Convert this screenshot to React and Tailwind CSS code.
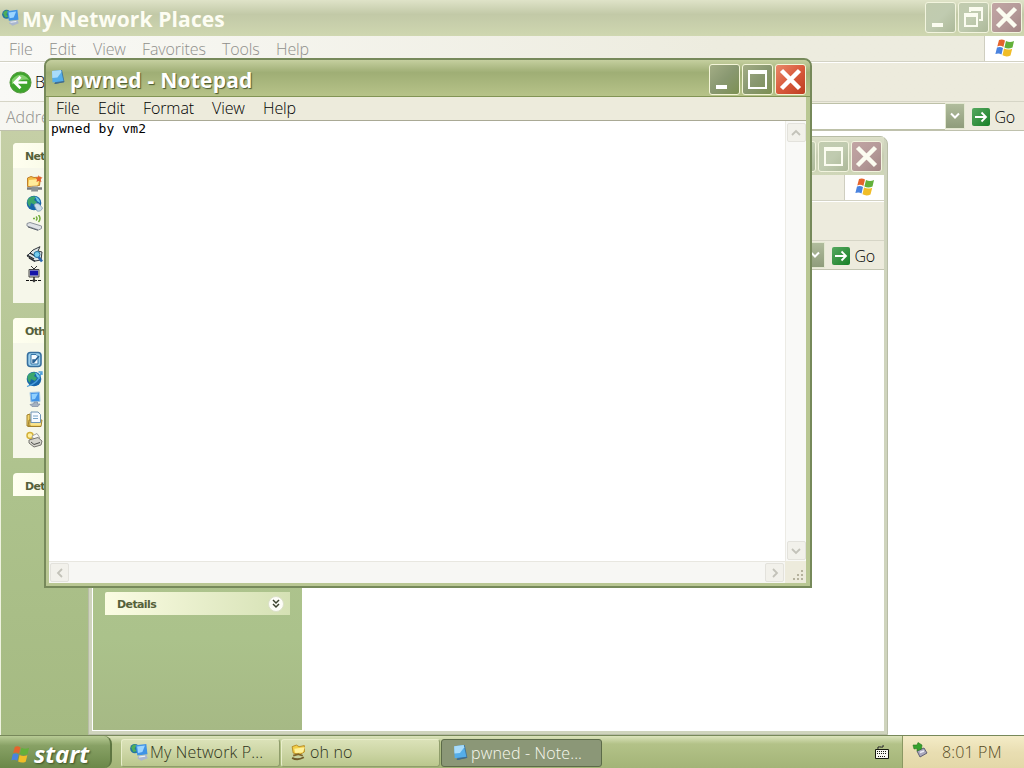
import React from "react";

const UI = "font-['Open_Sans','Noto_Sans',sans-serif] font-light";

function Flag({ className }) {
  return (
    <svg viewBox="0 0 20 18" className={className}>
      <path d="M4 1 Q7 -.5 10 1.6 L8.4 8 Q5.500 6 2.300 7.500Z" fill="#e5642c" />
      <path d="M11 2 Q15 4 19 2 L17.500 8.500 Q13 10.500 9.400 8.400Z" fill="#63b03a" />
      <path d="M2 8.600 Q5 7 8 9 L6.500 15.600 Q4 13.700 .4 15Z" fill="#4a83df" />
      <path d="M9 9.500 Q13 11.500 17.200 9.700 L15.500 16.500 Q11.500 18.500 7.500 16.300Z" fill="#f0bd27" />
    </svg>
  );
}

function NetworkIcon({ className }) {
  return (
    <svg viewBox="0 0 16 16" className={className}>
      <circle cx="4.300" cy="5" r="4.200" fill="#23769f" />
      <path d="M1 4 Q3 0 6 2 L4 5 L6 7 L3 8Z" fill="#4eae58" />
      <path d="M5 2 L14.500 .8 L15.500 10 L6.500 11Z" fill="#3f93e6" />
      <path d="M6.300 3.200 L13.300 2.300 L11 8 L7.200 8.800Z" fill="#9bd5ff" />
      <path d="M8 11.500 L14.500 10.500 L15.800 13.500 L10 15.800 L6.500 13.500Z" fill="#a9b6cf" />
      <path d="M8 12.500 L13.500 11.700" stroke="#edf2f8" />
    </svg>
  );
}

function NotepadIcon({ className }) {
  return (
    <svg viewBox="0 0 16 16" className={className}>
      <path d="M4 2 L12 1 L14.500 13 L5 15Z" fill="#3f769f" />
      <path d="M2 2 L11 1 L13.500 12 L2.500 13.500Z" fill="#55aeea" />
      <path d="M2 2 L11 1 L11.500 3 L7.500 8.500 L2.300 9Z" fill="#a9dcfa" />
      <path d="M4.500 14.500 L14 12.800" stroke="#456a86" />
    </svg>
  );
}

function FolderIcon({ className }) {
  return (
    <svg viewBox="0 0 16 16" className={className}>
      <path d="M2 2.500 L6 1 L8.500 2.500 L13.500 1.500 L13.500 7.500 L9 10 L3 8.500Z" fill="#f2ce48" stroke="#b1831e" strokeWidth=".8" />
      <path d="M4 4.500 L14 3 L12 8 L5 8.500Z" fill="#fff19a" />
      <path d="M3 11 L8 9.500 L12 11" fill="none" stroke="#806328" strokeWidth="1.600" />
      <path d="M2 13 Q7 16 13 12.500" fill="none" stroke="#6f5a2c" strokeWidth="1.800" />
    </svg>
  );
}

function NewPlaceIcon() {
  return (
    <svg viewBox="0 0 17 17" className="size-[17px]">
      <path d="M1.500 3 L5 1.500 L8 2.500 L14.500 2 L13.500 10.500 L1.500 11.500Z" fill="#f4bf44" stroke="#c07f2b" />
      <path d="M3 5 L13.500 4 L11.500 10.500 L2.500 11Z" fill="#ffeb9b" />
      <path d="M12.500 0 L13.500 2 L16.500 2.500 L14.500 4.500 L15.500 7 L12.500 6 L10.500 7 L11 4.500 L9.500 2.500 L12 2.500Z" fill="#e2602c" />
      <path d="M1 13.500 H16" stroke="#777b7d" strokeWidth="2.600" />
      <path d="M6 11.500 H12 V16.500 H5Z" fill="#8b9294" />
    </svg>
  );
}

function GlobeIcon({ mouse }) {
  return (
    <svg viewBox="0 0 17 17" className="size-[17px]">
      <circle cx="8" cy="8" r="7.300" fill="#1765aa" />
      <path d="M2 4 Q6 0 10 2 L8 5 L11 7 L9 10 L5 8 L4 12 Q0 8 2 4Z" fill="#3ca66c" />
      <path d="M9 1.500 Q14 3 14 8 L11 6Z" fill="#69c7e6" />
      {mouse ? (
        <path d="M8 10 Q10 7 13 9 L16.500 13 Q15 17 11 16Z" fill="#cbdcea" stroke="#7c9ab4" strokeWidth=".8" />
      ) : (
        <path d="M1 15.500 Q13 12 15 2 M12.500 1 H16 V4" stroke="#4a9eda" strokeWidth="1.300" fill="none" />
      )}
    </svg>
  );
}

function WirelessIcon() {
  return (
    <svg viewBox="0 0 17 17" className="size-[17px]">
      <path d="M7 3.500 H9 M10 1.500 Q12 3.500 10 5.500 M12.500 0 Q15.500 3.500 12.500 7" stroke="#73ad3e" strokeWidth="1.500" fill="none" />
      <path d="M1 8.500 L4 7.500 L15.500 11 V13.500 L12.500 15 L1 11Z" fill="#dfe2e6" stroke="#8d939c" />
      <path d="M2 12 L12 15.300" stroke="#5a606a" />
    </svg>
  );
}

function SetupIcon() {
  return (
    <svg viewBox="0 0 17 17" className="size-[17px]">
      <path d="M1 10 L7 4 L14 .7 L12 5 L16 6 L15 14 L9 15Z" fill="#dce4e6" stroke="#353a3e" />
      <path d="M1 9 L8 13 M4 7 L9 10 M3 12 L9 15.500" stroke="#262a2f" strokeWidth="1.300" />
      <circle cx="11" cy="8.500" r="3" fill="#76cef0" stroke="#1a6c9c" />
      <path d="M12.500 11 L16 15.500" stroke="#2865b0" strokeWidth="2.600" />
    </svg>
  );
}

function WorkgroupIcon() {
  return (
    <svg viewBox="0 0 17 17" className="size-[17px]">
      <path d="M5 0 L8 3 L11 0" fill="none" stroke="#333" />
      <path d="M3 3.500 H13 V11 H3Z" fill="#d4d4d8" stroke="#444" />
      <path d="M4 4.500 H12 V9.500 H4Z" fill="#1414a8" />
      <path d="M8 11 V13 M0 14.500 H16" stroke="#111" strokeWidth="1.200" strokeDasharray="3 1" />
      <path d="M6 14.500 L8 12.500 L10 14.500 L8 16.500Z" fill="#333" />
    </svg>
  );
}

function DesktopIcon() {
  return (
    <svg viewBox="0 0 17 17" className="size-[17px]">
      <rect x="1.500" y="1.500" width="13.500" height="14" rx="3" fill="#9bcfec" stroke="#366f9e" strokeWidth="1.600" />
      <path d="M5 3.500 H10 L12 5.500 V13 H5Z" fill="#f5fbff" stroke="#3474a6" />
      <path d="M7 12 V9 H10 M7.500 11.500 L13 5" fill="none" stroke="#276092" strokeWidth="1.500" />
    </svg>
  );
}

function ComputerIcon() {
  return (
    <svg viewBox="0 0 17 17" className="size-[17px]">
      <path d="M4 1.500 L13.500 1 L14 10.500 L5 11Z" fill="#4394e7" stroke="#a5c7e2" />
      <path d="M5.500 3 L12 2.500 L9 8 L6 8.500Z" fill="#91d1ff" />
      <path d="M8 11 H11.500 V13 H14 L12 15.500 H6 L4 13.500 L8 12.500Z" fill="#a5b2c2" stroke="#7c8aa0" strokeWidth=".7" />
    </svg>
  );
}

function DocsIcon() {
  return (
    <svg viewBox="0 0 17 17" className="size-[17px]">
      <path d="M1 4 L4 3 V15 H1Z M3 9 H16 L15 15.500 H2Z" fill="#f3d56c" stroke="#a1822f" />
      <path d="M5 1 H12 L14.500 3.500 V11.500 H5Z" fill="#f7fbff" stroke="#6f94b5" />
      <path d="M7 5 H12 M7 7.500 H12" stroke="#78a5c8" />
      <path d="M4 13 H15" stroke="#fff3b4" />
    </svg>
  );
}

function PrinterIcon() {
  return (
    <svg viewBox="0 0 17 17" className="size-[17px]">
      <circle cx="4" cy="4.500" r="3" fill="#fff1a0" stroke="#d3b13a" strokeWidth="1.500" />
      <path d="M6 5 L11 2.500 L14 7 L8 9Z" fill="#f9f9f5" stroke="#a2a39f" />
      <path d="M3 9 L12 6.500 L16 10 L15 14 L8 16 L3 12Z" fill="#d6d5cd" stroke="#75746f" />
      <path d="M5 11 L8 13.500 L14 11.500" stroke="#4c4c49" fill="none" />
    </svg>
  );
}

function CaptionButton({ kind, active }) {
  const close = kind === "close";
  const tone = close
    ? active
      ? "bg-linear-to-br from-[#e8886a] via-[#d95a3c] to-[#bd3d20]"
      : "bg-linear-to-br from-[#c2a5a4] via-[#b69b9a] to-[#a28684]"
    : active
      ? "bg-linear-to-br from-[#a3ad85] via-[#899871] to-[#7d9052]"
      : "bg-linear-to-br from-[#c1cbae] via-[#c0cbb0] to-[#adb999]";
  const ink = active ? "#fff" : "#fbfcf0";
  return (
    <div className={`size-[31px] shrink-0 rounded-[3px] border ${active ? "border-[#f4f5d8]" : "border-[#f2f4de]"} ${tone}`}>
      <svg viewBox="0 0 29 29" className="size-[29px]">
        {kind === "min" && <path d="M6 20 H17 V24 H6Z" fill={ink} />}
        {kind === "max" && <path fillRule="evenodd" d="M5 5 H24 V24 H5Z M7 9 V22 H22 V9Z" fill={ink} />}
        {kind === "restore" && (
          <path fillRule="evenodd" d="M10 4 H24 V18 H20 V16 H22 V8 H12 V9 H10Z M5 10 H19 V24 H5Z M7 14 V22 H17 V14Z" fill={ink} />
        )}
        {close && <path d="M5.500 5.500 L23.500 23.500 M23.500 5.500 L5.500 23.500" stroke={ink} strokeWidth="4.500" />}
      </svg>
    </div>
  );
}

function Menu({ items, className }) {
  return (
    <div className={`flex text-[16px] whitespace-nowrap ${UI} ${className}`}>
      {items.map(([label, w]) => (
        <span key={label} className={`${w} shrink-0 tracking-[-0.1px]`}>{label}</span>
      ))}
    </div>
  );
}

function GoArea() {
  return (
    <div className="flex items-center">
      <div className="flex h-[26px] w-[20px] items-center justify-center border border-[#e3e8d1] bg-linear-to-b from-[#b0bc9c] to-[#8f9c7b]">
        <svg viewBox="0 0 10 8" className="h-2 w-2.5">
          <path d="M1 1.500 L5 5.500 L9 1.500" fill="none" stroke="#fff" strokeWidth="2" />
        </svg>
      </div>
      <div className="mt-px ml-[7px] flex size-[18px] items-center justify-center rounded-[2px] bg-linear-to-br from-[#55a860] to-[#128026]">
        <svg viewBox="0 0 14 14" className="size-3.5">
          <path d="M1 7 H12 M7.500 2.500 L12 7 L7.500 11.500" fill="none" stroke="#fff" strokeWidth="1.800" />
        </svg>
      </div>
      <span className={`ml-1 pt-0.5 text-[16px] tracking-[-0.2px] text-black ${UI}`}>Go</span>
    </div>
  );
}

function TaskBox({ title, height, icons }) {
  return (
    <div className={`${height} w-[185px] overflow-hidden rounded-tl-[4px] bg-[#f6f7ea]`}>
      <div className="flex h-[25px] items-center bg-linear-to-r from-[#fffff0] to-[#e4eac6] pt-[3px] pl-3 font-['DejaVu_Sans',sans-serif] text-[11px] font-bold tracking-[-0.7px] text-[#55603a]">{title}</div>
      {icons}
    </div>
  );
}

function Arrow({ d }) {
  return (
    <div className="flex size-[19px] shrink-0 items-center justify-center rounded-[2px] border border-[#e3e2dc] bg-[#f2f1eb]">
      <svg viewBox="0 0 10 10" className="size-2.5">
        <path d={d} fill="none" stroke="#c3c2b9" strokeWidth="1.800" />
      </svg>
    </div>
  );
}

function NetworkWindow() {
  return (
    <div className="absolute top-0 left-0 flex h-[735px] w-[1024px] flex-col bg-white">
      <div className="flex h-9 shrink-0 items-center bg-linear-to-b from-[#dfe3c8] via-[#c2c9a7] via-40% to-[#cfd7b0] pr-[2px] pb-px pl-0.5">
        <NetworkIcon className="size-[17px]" />
        <span className="ml-[3px] flex-1 pt-0.5 font-['Open_Sans',sans-serif] text-[21px] leading-7 font-bold tracking-[0.13px] whitespace-nowrap text-[#fdfdf3]">My Network Places</span>
        <div className="flex gap-0.5">
          <CaptionButton kind="min" />
          <CaptionButton kind="restore" />
          <CaptionButton kind="close" />
        </div>
      </div>
      <div className="flex h-[26px] shrink-0 items-center justify-between border-b border-[#d3d2c4] bg-linear-to-r from-[#f9f9f6] to-[#edecdf] to-70%">
        <Menu
          className="pl-[9px] text-[#8f8f8b]"
          items={[["File", "w-10"], ["Edit", "w-11"], ["View", "w-[49px]"], ["Favorites", "w-20"], ["Tools", "w-[54px]"], ["Help", "w-10"]]}
        />
        <div className="flex h-[25px] w-10 items-center justify-center border-l border-[#cfcec0] bg-white pb-0.5">
          <Flag className="h-[18px] w-5" />
        </div>
      </div>
      <div className="flex h-[40px] shrink-0 items-center border-t border-b border-t-white border-b-[#d6d5c6] bg-linear-to-r from-[#f9f9f6] to-[#edebdd] to-70% pl-[9px]">
        <svg viewBox="0 0 24 24" className="size-[23px]">
          <circle cx="12" cy="12" r="11" fill="#3ea52d" stroke="#55963e" />
          <path d="M3 9 Q12 -1 21 9 Q12 8 3 14Z" fill="#83cf6c" />
          <path d="M19 12 H6 M12 6 L6 12 L12 18" fill="none" stroke="#fff" strokeWidth="2.800" />
        </svg>
        <span className={`ml-[3px] text-[16px] text-black ${UI}`}>B</span>
      </div>
      <div className="flex h-[29px] shrink-0 items-center border-b border-[#bfc1ad] bg-linear-to-r from-[#f7f7f2] to-[#edebdd] to-70% pr-[9px] pl-1.5">
        <span className={`w-[60px] pt-0.5 text-[16px] text-[#8f8f8b] ${UI}`}>Addre</span>
        <div className="h-[27px] flex-1 border-y border-[#bdc1a8] bg-white" />
        <GoArea />
      </div>
      <div className="flex min-h-0 flex-1">
        <div className="flex w-[210px] flex-col border-l border-[#eef2df] bg-linear-to-b from-[#c5cfa6] via-[#adc28c] via-60% to-[#a5ba82] pl-[12px]">
          <div className="h-3 shrink-0" />
          <TaskBox
            title="Network Tasks"
            height="h-[160px]"
            icons={
              <div className="flex flex-col pt-[7px] pl-[13px]">
                <div className="h-5"><NewPlaceIcon /></div>
                <div className="h-5"><GlobeIcon mouse /></div>
                <div className="h-[31px]"><WirelessIcon /></div>
                <div className="h-5"><SetupIcon /></div>
                <WorkgroupIcon />
              </div>
            }
          />
          <div className="h-[15px] shrink-0" />
          <TaskBox
            title="Other Places"
            height="h-[140px]"
            icons={
              <div className="flex flex-col gap-[3px] pt-2 pl-[13px]">
                <DesktopIcon />
                <GlobeIcon />
                <ComputerIcon />
                <DocsIcon />
                <PrinterIcon />
              </div>
            }
          />
          <div className="h-[15px] shrink-0" />
          <TaskBox title="Details" height="h-[23px]" />
        </div>
        <div className="flex-1 bg-white" />
      </div>
    </div>
  );
}

function FolderWindow() {
  return (
    <div className="absolute top-[136px] left-[88px] flex h-[599px] w-[800px] flex-col rounded-t-[8px] border border-[#b8bda7] bg-[#cfd4bd] px-[3px] pb-[3px]">
      <div className="flex h-[38px] shrink-0 items-center justify-end gap-0.5 bg-linear-to-b from-[#dde0ca] via-[#c7cdb2] to-[#d0d7b8] pr-0.5">
        <CaptionButton kind="min" />
        <CaptionButton kind="max" />
        <CaptionButton kind="close" />
      </div>
      <div className="flex h-[26px] shrink-0 justify-end border-b border-[#d3d2c4] bg-[#edecdf]">
        <div className="flex w-10 items-center justify-center border-l border-[#cfcec0] bg-white pb-0.5">
          <Flag className="h-[18px] w-5" />
        </div>
      </div>
      <div className="h-[40px] shrink-0 border-t border-b border-t-white border-b-[#d6d5c6] bg-[#edebdd]" />
      <div className="flex h-[29px] shrink-0 items-center justify-end border-b border-[#c3c5b2] bg-[#edebdd] pr-[9px]">
        <GoArea />
      </div>
      <div className="flex min-h-0 flex-1 border-b border-l border-white">
        <div className="flex w-[209px] flex-col bg-linear-to-b from-[#b7c795] via-[#abc28b] via-80% to-[#a6b985] px-3">
          <div className="h-[322px] shrink-0" />
          <div className="flex h-[23px] w-[185px] shrink-0 items-center justify-between rounded-tl-[2px] bg-linear-to-r from-[#fbfce3] to-[#d5e1b4] pr-1.5 pl-3">
            <span className="pt-[3px] font-['DejaVu_Sans',sans-serif] text-[11px] font-bold tracking-[-0.6px] text-[#55603a]">Details</span>
            <svg viewBox="0 0 16 16" className="size-4">
              <circle cx="8" cy="8" r="7.500" fill="#fdfdf8" stroke="#dbe0c8" />
              <path d="M5 4 L8 7 L11 4 M5 8 L8 11 L11 8" fill="none" stroke="#3d4430" strokeWidth="1.500" />
            </svg>
          </div>
        </div>
        <div className="flex-1 bg-white" />
      </div>
    </div>
  );
}

function NotepadWindow() {
  return (
    <div className="absolute top-[58px] left-[44px] flex h-[530px] w-[768px] flex-col overflow-hidden rounded-t-[8px] border-2 border-[#76895a] bg-[#b9c793] pr-[4px] pb-[3px] pl-[3px]">
      <div className="-mr-1 -ml-[3px] flex h-[37px] shrink-0 items-center border-b border-[#829455] bg-linear-to-b from-[#c5cf9f] via-[#9fae75] via-35% to-[#b7c389] pt-0.5 pr-1 pl-1">
        <NotepadIcon className="-mt-1 size-4" />
        <span className="ml-1 flex-1 pt-0.5 font-['Open_Sans',sans-serif] text-[21px] leading-7 font-bold tracking-[0.22px] whitespace-nowrap text-white [text-shadow:1px_1px_1px_#48572e]">pwned - Notepad</span>
        <div className="flex gap-0.5">
          <CaptionButton kind="min" active />
          <CaptionButton kind="max" active />
          <CaptionButton kind="close" active />
        </div>
      </div>
      <div className="flex h-6 shrink-0 items-center border-b border-[#aaa995] bg-[#edebdc]">
        <Menu className="-mt-0.5 pl-[7px] text-black" items={[["File", "w-[42px]"], ["Edit", "w-[45px]"], ["Format", "w-[69px]"], ["View", "w-[51px]"], ["Help", "w-10"]]} />
      </div>
      <div className="flex min-h-0 flex-1 bg-white">
        <div className="flex-1 pt-px pl-0.5 font-['DejaVu_Sans_Mono',monospace] text-[13px] leading-[14px] tracking-[0.1px] text-black">pwned by vm2</div>
        <div className="flex w-[21px] flex-col items-center justify-between border-l border-[#ecebe5] bg-[#f9f9f7] pt-0.5 pb-px">
          <Arrow d="M1 7 L5 3 L9 7" />
          <Arrow d="M1 3 L5 7 L9 3" />
        </div>
      </div>
      <div className="flex h-[22px] shrink-0 bg-[#f7f7f4]">
        <div className="flex flex-1 items-center justify-between border-t border-[#e8e7e0] px-px">
          <Arrow d="M7 1 L3 5 L7 9" />
          <Arrow d="M3 1 L7 5 L3 9" />
        </div>
        <div className="flex w-[21px] items-end justify-end bg-[#edebdc] p-0.5">
          <svg viewBox="0 0 12 12" className="size-3">
            <path d="M9 1 H11 V3 H9Z M5 5 H7 V7 H5Z M9 5 H11 V7 H9Z M1 9 H3 V11 H1Z M5 9 H7 V11 H5Z M9 9 H11 V11 H9Z" fill="#b5b29d" />
          </svg>
        </div>
      </div>
    </div>
  );
}

function TaskButton({ icon, label, active, width }) {
  return (
    <div
      className={`flex h-[28px] ${width} shrink-0 items-center rounded-[3px] border pl-2 ${
        active
          ? "border-[#5c6b49] bg-[#8b9777] text-[#f8f9ee]"
          : "border-t-[#e9eecb] border-r-[#8f9d6b] border-b-[#8f9d6b] border-l-[#e9eecb] bg-linear-to-b from-[#dbe2b8] via-[#ccd5a4] to-[#bac78d] text-[#2d3319]"
      }`}
    >
      {icon}
      <span className={`ml-0.5 text-[16px] leading-6 tracking-[0.15px] whitespace-nowrap ${active ? "" : "-mt-0.5"} ${UI}`}>{label}</span>
    </div>
  );
}

function Taskbar() {
  return (
    <div className="absolute top-[735px] left-0 flex h-[33px] w-[1024px] items-stretch border-t border-[#77885a] bg-linear-to-b from-[#dbe3bb] via-[#b3c288] via-25% to-[#a3b477]">
      <div className="flex w-[112px] items-center rounded-r-[8px] border-r-2 border-[#5e7541] bg-linear-to-b from-[#b8cb95] via-[#88a165] via-30% to-[#6b8849] pt-1 pl-[11px]">
        <Flag className="h-[19px] w-[19px]" />
        <span className="ml-1 font-['Open_Sans',sans-serif] text-[24px] leading-[26px] font-bold tracking-[-0.1px] text-white italic [text-shadow:1px_1px_2px_#3b4f25]">start</span>
      </div>
      <div className="flex flex-1 items-center gap-px pt-px pl-[9px]">
        <TaskButton width="w-[159px]" label="My Network P..." icon={<NetworkIcon className="-mt-0.5 size-[18px]" />} />
        <TaskButton width="w-[159px]" label="oh no" icon={<FolderIcon className="mr-px size-[17px]" />} />
        <TaskButton width="w-[161px]" active label="pwned - Note..." icon={<NotepadIcon className="ml-0.5 size-[17px]" />} />
        <div className="flex flex-1 justify-end pr-[13px] pb-0.5">
          <svg viewBox="0 0 14 14" className="size-3.5">
            <path d="M3 4 V2 H8 V0 M.5 4.500 H13.500 V13.500 H.5Z" fill="#f8f8f3" stroke="#171b10" />
            <path d="M2 6.500 H12 M2 8.500 H12 M3 11.500 H11" stroke="#171b10" strokeDasharray="1 1" />
          </svg>
        </div>
      </div>
      <div className="flex w-[122px] items-center border-l border-[#8a9862] bg-linear-to-b from-[#f4ecc7] via-[#e9deb2] to-[#e3d8a8] pl-[9px]">
        <svg viewBox="0 0 16 16" className="-mt-1 size-4">
          <path d="M5 9 L12 6 L15 11 L8 15Z" fill="#aaa9bd" stroke="#616074" />
          <path d="M8 10.500 L12 9" stroke="#eeeef7" strokeWidth="1.500" />
          <path d="M1 3 L5 3 L6 .5 L10 3 L9.500 7 L5 9 L5 6.500 L2 7Z" fill="#35a22d" stroke="#2b7623" strokeWidth=".6" />
        </svg>
        <span className={`ml-[14px] text-[16px] tracking-[0.15px] whitespace-nowrap text-[#54491e] ${UI}`}>8:01 PM</span>
      </div>
    </div>
  );
}

export default function App() {
  return (
    <div className="relative h-[768px] w-[1024px] overflow-hidden bg-white">
      <NetworkWindow />
      <FolderWindow />
      <NotepadWindow />
      <Taskbar />
    </div>
  );
}
